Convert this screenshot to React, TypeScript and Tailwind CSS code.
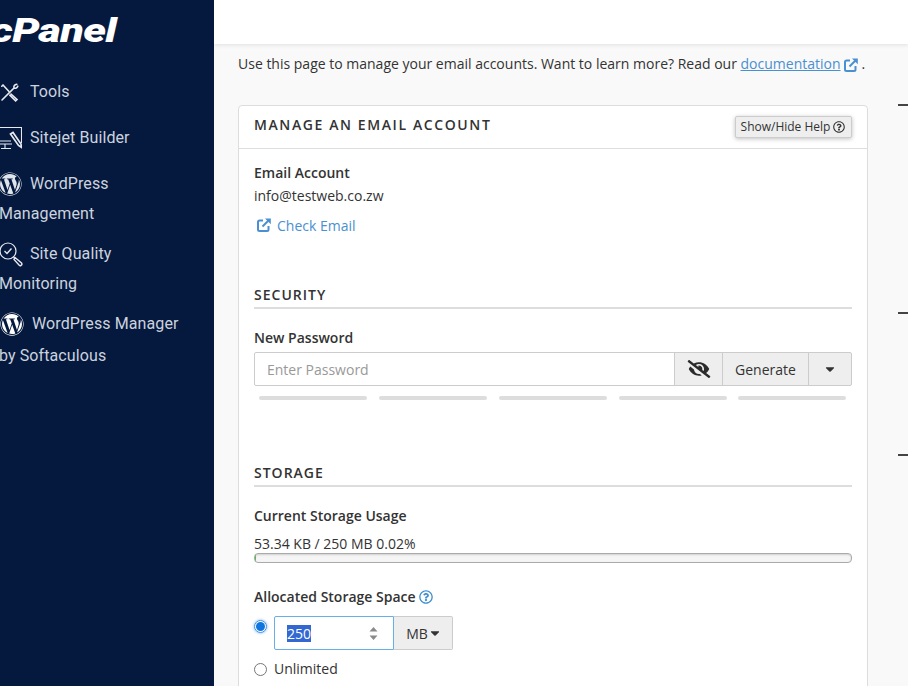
import { FaWordpress, FaEyeSlash, FaCaretDown, FaRegQuestionCircle } from "react-icons/fa";

function ToolsIcon() {
  return (
    <svg width="19" height="19" viewBox="0 0 19 19" fill="none" stroke="#e6eaf0" strokeWidth="1.6" strokeLinecap="round" className="shrink-0">
      <path d="M3 2 L9 8.5 M1.8 3.2 L3 2" />
      <path d="M11 11 L17 16.5 L15.6 17.8 L9.8 12.2" />
      <path d="M16.8 1.2 C14.6 1.6 13.4 3.2 14 5 L2 17 M17.8 3.2 C17.2 4.8 15.6 5.6 14 5" />
    </svg>
  );
}
function SitejetIcon() {
  return (
    <svg width="24" height="24" viewBox="0 0 24 24" fill="none" stroke="#e6eaf0" strokeWidth="1.1" className="shrink-0 -ml-[2px]">
      <path d="M2 1.5 H23.5 V17 M2 15 H13 M2 18 H14 M7 18.5 V22 M3 22.5 H13" />
      <path d="M12.5 8 L15 6.5 L23 18 L23.5 21.5 L20.5 19.5 Z" strokeWidth="1.7" fill="#05193e" />
    </svg>
  );
}
function QualityIcon() {
  return (
    <svg width="23" height="25" viewBox="0 0 23 25" fill="none" stroke="#e6eaf0" strokeWidth="1.2" className="shrink-0">
      <circle cx="8" cy="9" r="8" />
      <path d="M4.5 9 L7 11.5 L11.5 6.5" strokeWidth="1.4" />
      <path d="M13.5 15 L15 16.5" />
      <path d="M15 15.5 L21.5 21 Q22.5 22.5 21 23.5 Q20 24 19 23 L14 17.5 Z" strokeWidth="1.4" />
    </svg>
  );
}

function NavRow({ icon, label, gap, rest, restClass }: { icon: React.ReactNode; label: string; gap: string; rest?: string; restClass?: string }) {
  return (
    <li>
      <div className={`flex h-[24px] items-center ${gap}`}>
        {icon}
        <span>{label}</span>
      </div>
      {rest && <div className={`-ml-[1px] h-[24px] leading-[24px] ${restClass}`}>{rest}</div>}
    </li>
  );
}

function Ext({ className }: { className: string }) {
  return (
    <svg viewBox="0 0 14 14" fill="none" stroke="#4a90d0" strokeWidth="2" className={`shrink-0 ${className}`}>
      <path d="M6 2.5 H2.6 Q1 2.5 1 4 V11.5 Q1 13 2.6 13 H10 Q11.5 13 11.5 11.5 V8" />
      <path d="M5.5 8.5 L11.5 2.5" />
      <path d="M8 0.5 H13.8 V6.3 Z" fill="#4a90d0" stroke="none" />
    </svg>
  );
}

function Section({ title, className }: { title: string; className: string }) {
  return (
    <div className={`border-b-2 border-[#dddddd] pb-[2px] ${className}`}>
      <h2 className="text-[14px] leading-[20px] font-semibold tracking-[1px] text-[#333333]">{title}</h2>
    </div>
  );
}

export default function App() {
  return (
    <div className="flex h-[686px] w-[908px] overflow-hidden bg-[#f9f9f9] font-['Open_Sans',sans-serif] text-[14px] text-[#333333]">
      <aside className="w-[214px] shrink-0 overflow-hidden bg-[#05193e] font-['Roboto',sans-serif] text-[16px] tracking-[0.1px] text-[#ccd3de]">
        <div className="mt-[10px] -ml-[9px] h-[40px] origin-left scale-x-[1.27] text-[34px] leading-[40px] font-black tracking-[-0.5px] text-white italic">cPanel</div>
        <ul className="mt-[30px] flex flex-col">
          <NavRow icon={<ToolsIcon />} label="Tools" gap="gap-[11px]" />
          <div className="h-[22px]" />
          <NavRow icon={<SitejetIcon />} label="Sitejet Builder" gap="gap-[8px]" />
          <div className="h-[22px]" />
          <NavRow icon={<FaWordpress className="-ml-[2px] h-[24px] w-[24px] shrink-0 text-[#dfe4ec]" />} label="WordPress" gap="gap-[8px]" rest="Management" restClass="mt-[6px]" />
          <div className="h-[16px]" />
          <NavRow icon={<QualityIcon />} label="Site Quality" gap="gap-[7px]" rest="Monitoring" restClass="mt-[6px]" />
          <div className="h-[16px]" />
          <NavRow icon={<FaWordpress className="h-[24px] w-[24px] shrink-0 text-white" />} label="WordPress Manager" gap="gap-[8px]" rest="by Softaculous" restClass="mt-[8px]" />
        </ul>
      </aside>

      <div className="flex min-w-0 flex-1 flex-col">
        <header className="h-[44px] shrink-0 bg-white shadow-[0_1px_4px_rgba(0,0,0,0.1)]" />
        <div className="flex flex-1 overflow-hidden pl-[24px]">
          <main className="w-[630px] shrink-0">
            <p className="mt-[10px] flex h-[20px] items-center leading-[20px] whitespace-nowrap">
              Use this page to manage your email accounts. Want to learn more? Read our&nbsp;
              <a className="text-[#4a90d0] underline">documentation</a>
              <Ext className="mt-[2px] ml-[3px] h-[14px] w-[14px]" />
              <span className="ml-[4px]">.</span>
            </p>

            <section className="mt-[31px] rounded-t-[4px] border border-[#dddddd] bg-white">
              <div className="flex h-[43px] items-start justify-between border-b border-[#dddddd] pr-[15px] pl-[15px]">
                <h1 className="mt-[9px] text-[14px] leading-[20px] font-semibold tracking-[1.6px] text-[#333333]">MANAGE AN EMAIL ACCOUNT</h1>
                <button className="mt-[10px] flex h-[22px] w-[117px] items-center justify-center gap-[3px] rounded-[2px] border border-[#cccccc] bg-[#eeeeee] pr-[1px] text-[12px] text-[#333333] shadow-[0_1px_4px_rgba(0,0,0,0.25)]">
                  Show/Hide Help
                  <FaRegQuestionCircle className="h-[12px] w-[12px]" />
                </button>
              </div>

              <div className="px-[15px]">
                <div className="mt-[14px] h-[20px] leading-[20px] font-semibold">Email Account</div>
                <div className="mt-[3px] h-[20px] leading-[20px]">info@testweb.co.zw</div>
                <a className="mt-[9px] flex h-[20px] items-center gap-[6px] pl-[3px] text-[#4a90d0]">
                  <Ext className="h-[14px] w-[14px]" />
                  Check Email
                </a>

                <Section title="SECURITY" className="mt-[50px]" />
                <div className="mt-[19px] h-[20px] leading-[20px] font-semibold">New Password</div>
                <div className="mt-[4px] flex h-[34px]">
                  <div className="flex flex-1 items-center rounded-l-[2px] border border-[#cccccc] pl-[12px] text-[#999999]">Enter Password</div>
                  <div className="-ml-px flex w-[49px] items-center justify-center border border-[#cccccc] bg-[#eeeeee]">
                    <FaEyeSlash className="h-[18px] w-[24px] text-[#2b2b2b]" />
                  </div>
                  <div className="-ml-px flex w-[87px] items-center justify-center border border-[#cccccc] bg-[#eeeeee]">Generate</div>
                  <div className="-ml-px flex w-[44px] items-center justify-center rounded-r-[2px] border border-[#cccccc] bg-[#eeeeee]">
                    <FaCaretDown className="h-[14px] w-[12px] text-[#333333]" />
                  </div>
                </div>
                <div className="mt-[10px] flex gap-[12px] pl-[5px]">
                  <div className="h-[4px] w-[108px] rounded-full bg-[#dddddd]" />
                  <div className="h-[4px] w-[108px] rounded-full bg-[#dddddd]" />
                  <div className="h-[4px] w-[108px] rounded-full bg-[#dddddd]" />
                  <div className="h-[4px] w-[108px] rounded-full bg-[#dddddd]" />
                  <div className="-ml-[1px] h-[4px] w-[108px] rounded-full bg-[#dddddd]" />
                </div>

                <Section title="STORAGE" className="mt-[63px]" />
                <div className="mt-[19px] h-[20px] leading-[20px] font-semibold">Current Storage Usage</div>
                <div className="mt-[8px] h-[20px] leading-[20px]">53.34 KB / 250 MB 0.02%</div>
                <div className="-mt-[1px] h-[10px] overflow-hidden rounded-[4px] border border-[#aaaaaa] bg-[#f5f5f5] shadow-[inset_0_1px_2px_rgba(0,0,0,0.15)]">
                  <div className="h-full w-[1px] bg-[#5cb85c]" />
                </div>

                <div className="mt-[24px] flex h-[20px] items-center gap-[3px] leading-[20px] font-semibold">
                  Allocated Storage Space
                  <FaRegQuestionCircle className="h-[14px] w-[14px] text-[#3d8fd1]" />
                </div>
                <div className="mt-[9px] flex items-start">
                  <span className="mt-[4px] flex h-[13px] w-[13px] items-center justify-center rounded-full border border-[#3d8fe0] shadow-[0_0_3px_rgba(61,143,224,0.7)]">
                    <span className="h-[9px] w-[9px] rounded-full bg-[#0f75e0]" />
                  </span>
                  <div className="ml-[7px] flex h-[34px] w-[120px] items-center justify-between rounded-l-[2px] border border-[#66afe9] pr-[15px] pl-[12px]">
                    <span className="bg-[#3367d1] leading-[17px] text-white">250</span>
                    <svg width="9" height="13" viewBox="0 0 9 13" fill="#8a8a8a"><path d="M4.5 0 L8.5 4.5 H0.5 Z M0.5 8.5 H8.5 L4.5 13 Z" /></svg>
                  </div>
                  <div className="flex h-[34px] w-[59px] items-center justify-center gap-[2px] rounded-r-[2px] border border-l-0 border-[#cccccc] bg-[#eeeeee]">
                    MB
                    <FaCaretDown className="h-[14px] w-[10px] text-[#333333]" />
                  </div>
                </div>
                <div className="mt-[8px] flex h-[20px] items-center gap-[7px]">
                  <span className="mt-[3px] h-[13px] w-[13px] rounded-full border border-[#767676] bg-white" />
                  Unlimited
                </div>
                <div className="h-[100px]" />
              </div>
            </section>
          </main>
          <div className="ml-[30px] flex flex-1 flex-col">
            <div className="mt-[60px] h-[2px] bg-[#444444]" />
            <div className="mt-[206px] h-[2px] bg-[#444444]" />
            <div className="mt-[140px] h-[2px] bg-[#444444]" />
          </div>
        </div>
      </div>
    </div>
  );
}
